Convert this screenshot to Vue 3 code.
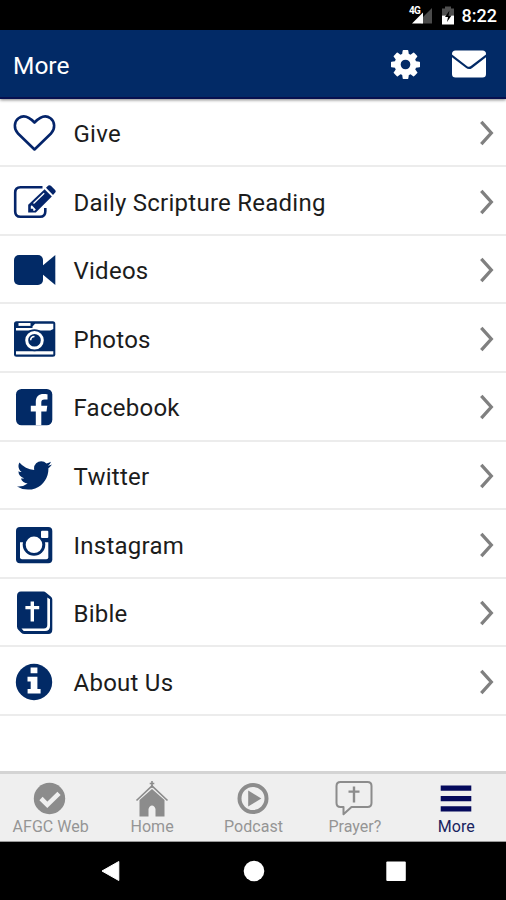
<template>
  <div class="phone">
    <div class="status">
      <svg class="status-icons" width="48" height="30" viewBox="0 0 48 30">
        <path d="M15 23.500V19L26 8v15.500z" fill="#4b4b4b" />
        <path d="M6 23.500 17 12.500v11z" fill="#fff" />
        <text x="3" y="13.500" class="net">4G</text>
        <path d="M36 8.500h3V6.500h6v2h3v7H36z" fill="#505050" />
        <path d="M36 15.500h12v9H36z" fill="#fff" />
        <path d="M43.500 10.500 39 17h3l-1 5 4.500-6.500h-3z" fill="#000" />
      </svg>
      <span class="clock">8:22</span>
    </div>

    <header class="header">
      <h1>More</h1>
      <svg class="gear" width="29" height="29" viewBox="128 128 1536 1536">
        <path fill="#fff" d="M1152 896q0-106-75-181t-181-75-181 75-75 181 75 181 181 75 181-75 75-181zm512-109v222q0 12-8 23t-20 13l-185 28q-19 54-39 91 35 50 107 138 10 12 10 25t-9 23q-27 37-99 108t-94 71q-12 0-26-9l-138-108q-44 23-91 38-16 136-29 186-7 28-36 28h-222q-14 0-24.500-8.500t-11.500-21.500l-28-184q-49-16-90-37l-141 107q-10 9-25 9-14 0-25-11-126-114-165-168-7-10-7-23 0-12 8-23 15-21 51-66.500t54-70.500q-27-50-41-99l-183-27q-13-2-21-12.500t-8-23.500v-222q0-12 8-23t19-13l186-28q14-46 39-92-40-57-107-138-10-12-10-24 0-10 9-23 26-36 98.500-107.500t94.500-71.500q13 0 26 10l138 107q44-23 91-38 16-136 29-186 7-28 36-28h222q14 0 24.500 8.500t11.500 21.500l28 184q49 16 90 37l142-107q9-9 24-9 13 0 25 10 129 119 165 170 7 8 7 22 0 12-8 23-15 21-51 66.500t-54 70.500q26 50 41 98l183 28q13 2 21 12.500t8 23.500z" />
      </svg>
      <svg class="mail" width="34" height="28" viewBox="0 0 34 28">
        <rect x="0" y="0.500" width="34" height="27" rx="3.500" fill="#fff" />
        <path d="M-1 5 14.500 17q2.500 1.900 5 0L35 5" fill="none" stroke="#022a66" stroke-width="2.200" />
      </svg>
    </header>

    <main class="list">
      <div v-for="item in items" :key="item.id" class="row">
        <svg class="row-icon" width="44" height="44" viewBox="0 0 44 44">
          <g v-if="item.id === 'give'" fill="none" stroke="#04246a" stroke-width="2.600" stroke-linejoin="round">
            <path d="M22.500 38.500 6 22.500C1.500 18 2 10.500 6.500 7.200c5-3.700 10.500-1.500 16 4.300 5.500-5.800 11-8 16-4.300C43 10.500 43.500 18 39 22.500z" />
          </g>
          <g v-else-if="item.id === 'daily'">
            <path d="M30.500 7.200H8.500q-5.300 0-5.300 5.300v19q0 5.300 5.300 5.300h19.500q5.300 0 5.300-5.300V28" fill="none" stroke="#04246a" stroke-width="2.600" />
            <path d="M16.200 32.600v-7.800L32.600 9.200l7.200 7.400L23.800 32.600z" fill="#04246a" />
            <path d="M34 7.800 36.300 5.600q1.300-1 2.600.2l4.200 4.300q1.200 1.300.1 2.500L41 15z" fill="#04246a" />
            <path d="M21.500 23.500 32.200 13.200" stroke="#fff" stroke-width="1.300" />
            <path d="M18.800 26.300v2.400h2.400v2h1.500l1.100-1.300-4-4.200z" fill="#fff" />
          </g>
          <g v-else-if="item.id === 'videos'" fill="#022a66">
            <rect x="2" y="7" width="29" height="30" rx="5" />
            <path d="M29 19 43.300 7v30L29 25z" />
          </g>
          <g v-else-if="item.id === 'photos'">
            <rect x="2" y="4.200" width="41.300" height="35.500" rx="2.500" fill="#022a66" />
            <path d="M4 11h16.500V9.400l2.500-2.600h18.300V12l-3 1.500H4z" fill="#fff" />
            <path d="M6.500 6h12v2.900h-12z" fill="#fff" />
            <path d="M4 34.300h37.300v3.200H4z" fill="#fff" />
            <circle cx="22.500" cy="23.300" r="11" fill="#022a66" />
            <circle cx="22.500" cy="23.300" r="7.800" fill="#022a66" stroke="#fff" stroke-width="3" />
            <path d="M18.700 23.300q0-3.800 3.800-3.800" fill="none" stroke="#fff" stroke-width="1.500" />
          </g>
          <g v-else-if="item.id === 'facebook'">
            <rect x="4" y="4" width="36.300" height="36.300" rx="5.500" fill="#022a66" />
            <path d="M23.800 40.300V26.500h-5v-5.800h5v-3.900c0-5.200 3.100-7.800 7.700-7.800 1.800 0 3 .1 4 .2v5.200h-3c-2.500 0-3.200 1.100-3.200 3v3.300h6l-.8 5.800h-5.200v13.800z" fill="#fff" />
          </g>
          <path
            v-else-if="item.id === 'twitter'"
            fill="#022a66"
            transform="translate(2.600 1.500) scale(.0222)"
            d="M1684 408q-67 98-162 167 1 14 1 42 0 130-38 259.500t-115.500 248.500-184.500 210.500-258 146-323 54.500q-271 0-496-145 35 4 78 4 225 0 401-138-105-2-188-64.500t-114-159.500q33 5 61 5 43 0 85-11-112-23-185.500-111.500t-73.500-205.500v-4q68 38 146 41-66-44-105-115t-39-154q0-88 44-163 121 149 294.500 238.500t371.500 99.500q-8-38-8-74 0-134 94.500-228.500t228.500-94.500q140 0 236 102 109-21 205-78-37 115-142 178 93-10 186-50z"
          />
          <g v-else-if="item.id === 'instagram'">
            <rect x="4" y="4" width="36.300" height="36.300" rx="4" fill="#022a66" />
            <path d="M8 19.200h28.300v15q0 2-2 2H10q-2 0-2-2z" fill="#fff" />
            <circle cx="22" cy="21.500" r="11.300" fill="#022a66" />
            <circle cx="22" cy="21.800" r="8.300" fill="#fff" />
            <rect x="29" y="7.800" width="7.300" height="7.300" rx="1" fill="#fff" />
          </g>
          <g v-else-if="item.id === 'bible'">
            <path d="M9 .5h22.500q1.500 0 2.300 1l5.200 4.200q1.300 1 1.300 2.800v30q0 4.500-4 4.500H12.500q-2 0-3.300-1.300L6.500 39Q5 37.500 5 35.500V5q0-4.500 4-4.500z" fill="#022a66" />
            <path d="M35.300 6.500V34q0 3.400-3.400 3.400H9.500l2.200 2.500h21.300q5 0 5-5V8.200z" fill="#fff" />
            <path d="M18.600 10.500h3.400v4.500h5.200v3.200H22v12.200h-3.400V18.200h-5.200V15h5.200z" fill="#fff" />
          </g>
          <g v-else>
            <circle cx="22" cy="22" r="18.200" fill="#022a66" />
            <path d="M18.600 7.500h6.800v5.800h-6.800zM15.500 16.700h9.900v12.200h3.200v4.700h-13v-4.700h3.100v-7.500h-3.200z" fill="#fff" />
          </g>
        </svg>
        <span class="label">{{ item.label }}</span>
        <svg class="chevron" width="16" height="28" viewBox="0 0 16 28">
          <path d="M2.300 2.800 12.300 14 2.300 25.200" fill="none" stroke="#808080" stroke-width="3.300" />
        </svg>
      </div>
    </main>

    <nav class="tabs">
      <div v-for="tab in tabs" :key="tab.id" class="tab" :class="{ active: tab.id === 'more' }">
        <svg width="44" height="40" viewBox="0 0 44 40">
          <g v-if="tab.id === 'web'">
            <circle cx="21.500" cy="20.500" r="15.700" fill="#8c8c8c" />
            <path d="m13 20.500 6.300 6.300L31 15.300" fill="none" stroke="#efefef" stroke-width="4.600" />
          </g>
          <g v-else-if="tab.id === 'home'" fill="#8c8c8c">
            <path d="M21.200 3h1.600v7h-1.600zM19.700 4.800h4.600v1.400h-4.600z" />
            <path d="M6.500 22.500 22 8l15.500 14.500" fill="none" stroke="#8c8c8c" stroke-width="1.700" />
            <path d="M9.500 22 22 11l12.500 11v16.500h-9V31q-1-3.500-3.500-3.500T18.500 31v7.500h-9z" />
          </g>
          <g v-else-if="tab.id === 'podcast'">
            <circle cx="22" cy="20.500" r="13.500" fill="none" stroke="#8c8c8c" stroke-width="4" />
            <path d="M17.200 12.500 30.300 20.500 17.200 28.500z" fill="#8c8c8c" />
          </g>
          <g v-else-if="tab.id === 'prayer'">
            <path d="M8.500 4h27q4 0 4 4v17q0 4-4 4H19.500l-8 7.300v-7.300h-3q-4 0-4-4V8q0-4 4-4z" fill="none" stroke="#8c8c8c" stroke-width="2" stroke-linejoin="round" />
            <path d="M20.800 8.500h2.400v4h4.300v2.300h-4.300v9.700h-2.400v-9.700h-4.300v-2.300h4.300z" fill="#8c8c8c" />
          </g>
          <path v-else d="M6.700 7.500h30.600v5.300H6.700zM6.700 18h30.600v5.300H6.700zM6.700 28.200h30.600v5.300H6.700z" fill="#050a5c" />
        </svg>
        <span>{{ tab.label }}</span>
      </div>
    </nav>

    <div class="softkeys">
      <svg width="22" height="22" viewBox="0 0 22 22"><path d="M2 11 18.800 1.500v19z" fill="#fff" stroke="#fff" stroke-linejoin="round" /></svg>
      <svg width="22" height="22" viewBox="0 0 22 22"><circle cx="11" cy="11" r="10.300" fill="#fff" /></svg>
      <svg width="22" height="22" viewBox="0 0 22 22"><rect x="1.300" y="1.600" width="19.500" height="19.500" rx="1" fill="#fff" /></svg>
    </div>
  </div>
</template>

<script setup>
const items = [
  { id: 'give', label: 'Give' },
  { id: 'daily', label: 'Daily Scripture Reading' },
  { id: 'videos', label: 'Videos' },
  { id: 'photos', label: 'Photos' },
  { id: 'facebook', label: 'Facebook' },
  { id: 'twitter', label: 'Twitter' },
  { id: 'instagram', label: 'Instagram' },
  { id: 'bible', label: 'Bible' },
  { id: 'about', label: 'About Us' },
]

const tabs = [
  { id: 'web', label: 'AFGC Web' },
  { id: 'home', label: 'Home' },
  { id: 'podcast', label: 'Podcast' },
  { id: 'prayer', label: 'Prayer?' },
  { id: 'more', label: 'More' },
]
</script>

<style>
body { margin: 0; background: #fff; }
</style>

<style scoped>
.phone { width: 506px; height: 900px; display: flex; flex-direction: column; overflow: hidden; background: #fff; font-family: Roboto, sans-serif; }
.status { height: 30px; flex: none; display: flex; align-items: center; justify-content: flex-end; padding-right: 9px; background: #000; color: #fff; }
.status-icons { margin-right: 8px; overflow: visible; }
.net { font: 700 10px Roboto, sans-serif; fill: #fff; letter-spacing: -0.8px; }
.clock { font-size: 18px; font-weight: 500; line-height: 30px; padding-top: 2px; }
.header { position: relative; z-index: 1; height: 68.700px; flex: none; box-sizing: border-box; display: flex; align-items: center; padding: 0 20px 0 13px; background: #022a66; border-bottom: 2px solid #07104f; box-shadow: 0 1px 3px rgba(0, 0, 0, 0.5); }
h1 { flex: 1; margin: 0; padding-top: 5px; color: #fff; font-size: 24.500px; font-weight: 400; line-height: 30px; }
.gear { margin-right: 32px; margin-top: 2px; }
.mail { margin-top: 2px; }
.list { flex: 1; min-height: 0; }
.row { height: 68.600px; box-sizing: border-box; display: flex; align-items: center; padding: 0 11px 0 12px; border-bottom: 2px solid #ececec; }
.row-icon { flex: none; margin-top: 2px; }
.label { flex: 1; margin-left: 17.500px; padding-top: 4px; color: #1c1c1c; font-size: 24px; line-height: 30px; letter-spacing: 0.250px; }
.chevron { flex: none; margin-top: 2px; }
.tabs { height: 71px; flex: none; box-sizing: border-box; display: flex; margin-right: -2px; padding-right: 1px; background: #efefef; border-top: 3px solid #d4d4d4; border-bottom: 1px solid #999; }
.tab { flex: 1; display: flex; flex-direction: column; align-items: center; padding-top: 4px; color: #959595; font-size: 16px; line-height: 18px; letter-spacing: 0.050px; }
.active { color: #19235f; }
.tab svg { flex: none; margin-left: -1px; }
.softkeys { height: 58px; flex: none; display: flex; align-items: center; justify-content: space-between; padding: 0 99px 0 100px; box-sizing: border-box; background: #000; }
</style>
